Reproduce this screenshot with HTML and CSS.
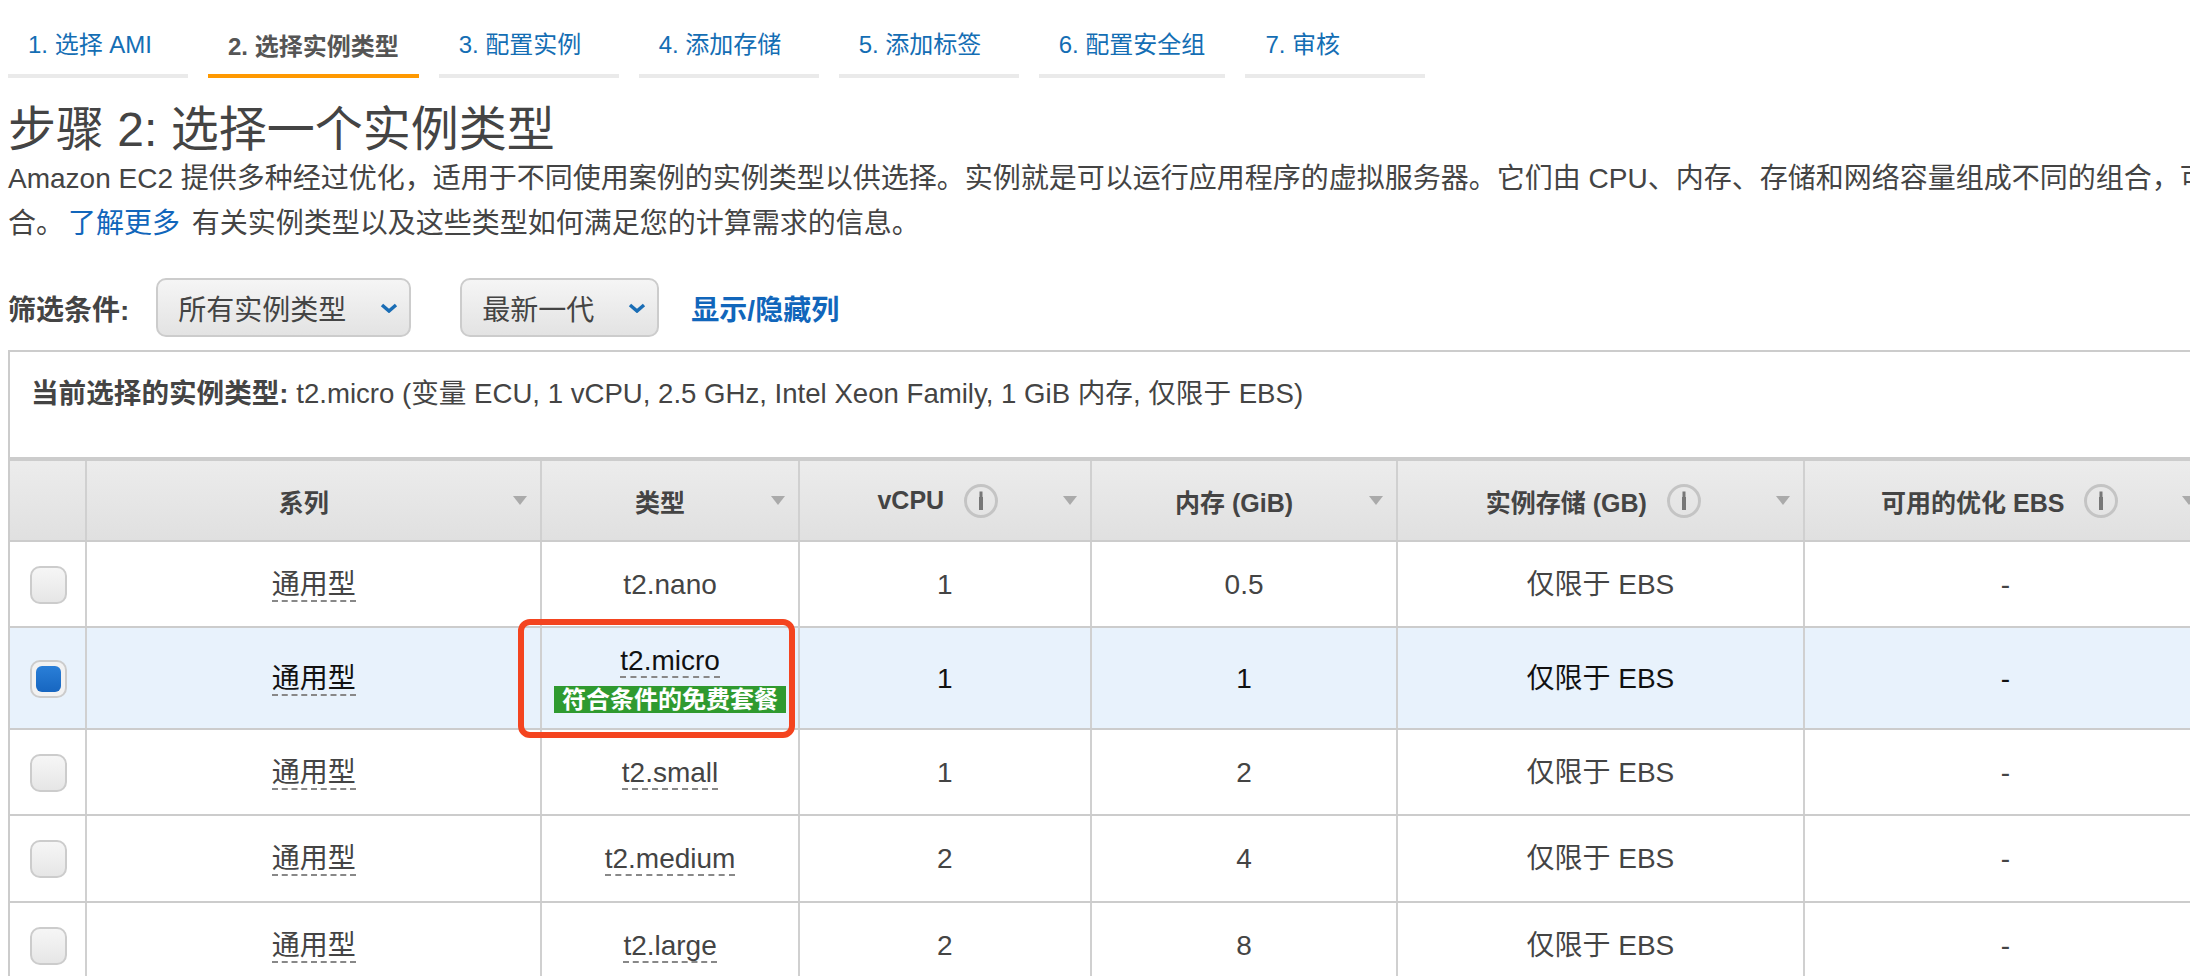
FILE: index.html

```html
<!DOCTYPE html>
<html lang="zh-CN">
<head>
  <meta charset="UTF-8" />
  <title>步骤 2: 选择一个实例类型</title>
  <link rel="stylesheet" href="styles.css">
</head>
<body>
  <div class="steps">
    <a class="step">1. 选择 AMI</a>
    <a class="step active">2. 选择实例类型</a>
    <a class="step">3. 配置实例</a>
    <a class="step">4. 添加存储</a>
    <a class="step">5. 添加标签</a>
    <a class="step">6. 配置安全组</a>
    <a class="step">7. 审核</a>
  </div>

  <h1>步骤 2: 选择一个实例类型</h1>
  <p class="intro">Amazon EC2 提供多种经过优化，适用于不同使用案例的实例类型以供选择。实例就是可以运行应用程序的虚拟服务器。它们由 CPU、内存、存储和网络容量组成不同的组合，可让您灵活地为您的应用程序选择适当的资源组<br>合。<a class="link more">了解更多</a> 有关实例类型以及这些类型如何满足您的计算需求的信息。</p>

  <div class="filters">
    <span class="filter-label">筛选条件:</span>
    <div class="select first">所有实例类型
      <svg class="chevron" width="18" height="10" viewBox="0 0 18 10"><path d="M2 2l7 6 7-6" fill="none" stroke="#1a6db5" stroke-width="3.5"/></svg>
    </div>
    <div class="select">最新一代
      <svg class="chevron" width="18" height="10" viewBox="0 0 18 10"><path d="M2 2l7 6 7-6" fill="none" stroke="#1a6db5" stroke-width="3.5"/></svg>
    </div>
    <a class="link toggle">显示/隐藏列</a>
  </div>

  <div class="panel">
    <div class="current"><b>当前选择的实例类型:</b> t2.micro (变量 ECU, 1 vCPU, 2.5 GHz, Intel Xeon Family, 1 GiB 内存, 仅限于 EBS)</div>
    <table class="types">
      <colgroup>
        <col class="c-check"><col class="c-family"><col class="c-type"><col class="c-cpu"><col class="c-mem"><col class="c-store"><col class="c-ebs">
      </colgroup>
      <thead>
        <tr>
          <th></th>
          <th>系列<i class="sort"></i></th>
          <th>类型<i class="sort"></i></th>
          <th><span class="head">vCPU<span class="info"><i></i></span></span><i class="sort"></i></th>
          <th>内存 (GiB)<i class="sort"></i></th>
          <th><span class="head">实例存储 (GB)<span class="info"><i></i></span></span><i class="sort"></i></th>
          <th><span class="head">可用的优化 EBS<span class="info"><i></i></span></span><i class="sort"></i></th>
        </tr>
      </thead>
      <tbody>
        <tr class="r1">
          <td><span class="check"></span></td>
          <td><span class="dashed">通用型</span></td>
          <td>t2.nano</td>
          <td>1</td><td>0.5</td><td>仅限于 EBS</td><td>-</td>
        </tr>
        <tr class="r2 selected">
          <td><span class="check on"></span></td>
          <td><span class="dashed">通用型</span></td>
          <td><span class="dashed">t2.micro</span><span class="free">符合条件的免费套餐</span></td>
          <td>1</td><td>1</td><td>仅限于 EBS</td><td>-</td>
        </tr>
        <tr class="r3">
          <td><span class="check"></span></td>
          <td><span class="dashed">通用型</span></td>
          <td><span class="dashed">t2.small</span></td>
          <td>1</td><td>2</td><td>仅限于 EBS</td><td>-</td>
        </tr>
        <tr class="r4">
          <td><span class="check"></span></td>
          <td><span class="dashed">通用型</span></td>
          <td><span class="dashed">t2.medium</span></td>
          <td>2</td><td>4</td><td>仅限于 EBS</td><td>-</td>
        </tr>
        <tr class="r5">
          <td><span class="check"></span></td>
          <td><span class="dashed">通用型</span></td>
          <td><span class="dashed">t2.large</span></td>
          <td>2</td><td>8</td><td>仅限于 EBS</td><td>-</td>
        </tr>
      </tbody>
    </table>
    <div class="callout"></div>
  </div>
</body>
</html>
```

FILE: styles.css

```css
html, body {
  margin: 0;
  padding: 0;
  height: 976px;
  overflow: hidden;
  background: #fff;
}
body {
  color: #444;
  font-family: "Liberation Sans", "Noto Sans CJK SC", sans-serif;
  font-size: 28px;
}
.steps {
  display: flex;
  gap: 20px;
  height: 78px;
  padding-left: 8px;
  box-sizing: border-box;
}
.step {
  min-width: 180px;
  box-sizing: border-box;
  padding: 31px 20px 0;
  border-bottom: 4px solid #eaeaea;
  color: #146eb4;
  font-size: 24px;
  line-height: 28px;
  white-space: nowrap;
}
.step.active {
  padding-top: 33px;
  border-bottom-color: #f90;
  color: #555;
  font-weight: bold;
}
h1 {
  margin: 24px 0 0 8px;
  font-size: 48px;
  font-weight: normal;
  line-height: 56px;
  white-space: nowrap;
}
.intro {
  margin: -2px 0 0 8px;
  line-height: 45px;
  white-space: nowrap;
}
.link {
  color: #1166bb;
}
.more {
  margin: 0 4px;
}
.filters {
  display: flex;
  align-items: center;
  height: 59px;
  margin: 32px 0 13px 8px;
}
.filter-label {
  margin-right: 27px;
  font-weight: bold;
}
.select {
  display: flex;
  align-items: center;
  gap: 34px;
  height: 59px;
  box-sizing: border-box;
  padding: 0 11px 0 20px;
  border: 2px solid #ccc;
  border-radius: 10px;
  background: linear-gradient(#f5f5f5, #e3e3e3);
}
.select.first {
  margin-right: 49px;
}
.toggle {
  margin-left: 32px;
  font-weight: bold;
}
.panel {
  position: relative;
  width: 2300px;
  margin-left: 8px;
  box-sizing: border-box;
  border-top: 2px solid #ccc;
  border-left: 2px solid #ccc;
}
.current {
  height: 105px;
  box-sizing: border-box;
  padding: 24px 0 0 21px;
  font-size: 27.6px;
  line-height: 36px;
  white-space: nowrap;
}
.types {
  table-layout: fixed;
  width: 2199px;
  border-collapse: collapse;
}
.c-check { width: 76px; }
.c-family { width: 455px; }
.c-type { width: 257px; }
.c-cpu { width: 292px; }
.c-mem { width: 306px; }
.c-store { width: 406px; }
.c-ebs { width: 405px; }
.types thead tr {
  height: 82px;
  border-top: 4px solid #ccc;
}
.types th {
  position: relative;
  padding: 0 20px 0 0;
  border-left: 2px solid #d0d0d0;
  border-bottom: 2px solid #ccc;
  background: linear-gradient(#ececec, #e0e0e0);
  font-size: 25px;
  white-space: nowrap;
}
.types th:first-child {
  border-left: 0;
}
.types td {
  padding: 1px 0 0;
  border-left: 2px solid #d0d0d0;
  border-bottom: 2px solid #ccc;
  text-align: center;
  line-height: 34px;
  white-space: nowrap;
}
.types td:first-child {
  border-left: 0;
  text-align: left;
  padding-left: 20px;
}
.types td:last-child {
  padding-right: 3px;
}
.r1 { height: 86px; }
.r2 { height: 102px; }
.r3 { height: 86px; }
.r4, .r5 { height: 87px; }
.selected td {
  background: #e8f2fc;
  color: #111;
}
.sort {
  position: absolute;
  top: 35px;
  right: 13px;
  width: 0;
  height: 0;
  border-left: 7px solid transparent;
  border-right: 7px solid transparent;
  border-top: 9px solid #aaa;
}
.head {
  display: inline-flex;
  align-items: center;
  gap: 20px;
  margin-left: 6px;
}
.info {
  display: flex;
  align-items: center;
  justify-content: center;
  width: 34px;
  height: 34px;
  box-sizing: border-box;
  border: 3px solid #c4c4c4;
  border-radius: 50%;
}
/* the "i" of the info icon: stem with a dot on top */
.info i {
  display: block;
  width: 4px;
  height: 13px;
  margin-top: 5px;
  background: #777;
  box-shadow: 0 -6px 0 -0.5px #777;
}
.check {
  display: block;
  width: 37px;
  height: 38px;
  box-sizing: border-box;
  border: 2px solid #ccc;
  border-radius: 10px;
  background: linear-gradient(#f6f6f6, #e6e6e6);
}
.check.on {
  padding: 4px;
  background: #f2f2f2;
}
.check.on::before {
  content: "";
  display: block;
  height: 100%;
  border-radius: 6px;
  background: linear-gradient(#2a7fd8, #1766c0);
}
.dashed {
  display: inline-block;
  line-height: 31px;
  border-bottom: 2px dashed #888;
}
.free {
  display: block;
  width: 232px;
  height: 27px;
  margin: 8px auto 0;
  background: #2f9a2f;
  color: #fff;
  font-size: 24px;
  font-weight: bold;
  line-height: 27px;
}
.callout {
  position: absolute;
  left: 508px;
  top: 267px;
  width: 277px;
  height: 119px;
  box-sizing: border-box;
  border: 6px solid #f4441f;
  border-radius: 12px;
}
```
